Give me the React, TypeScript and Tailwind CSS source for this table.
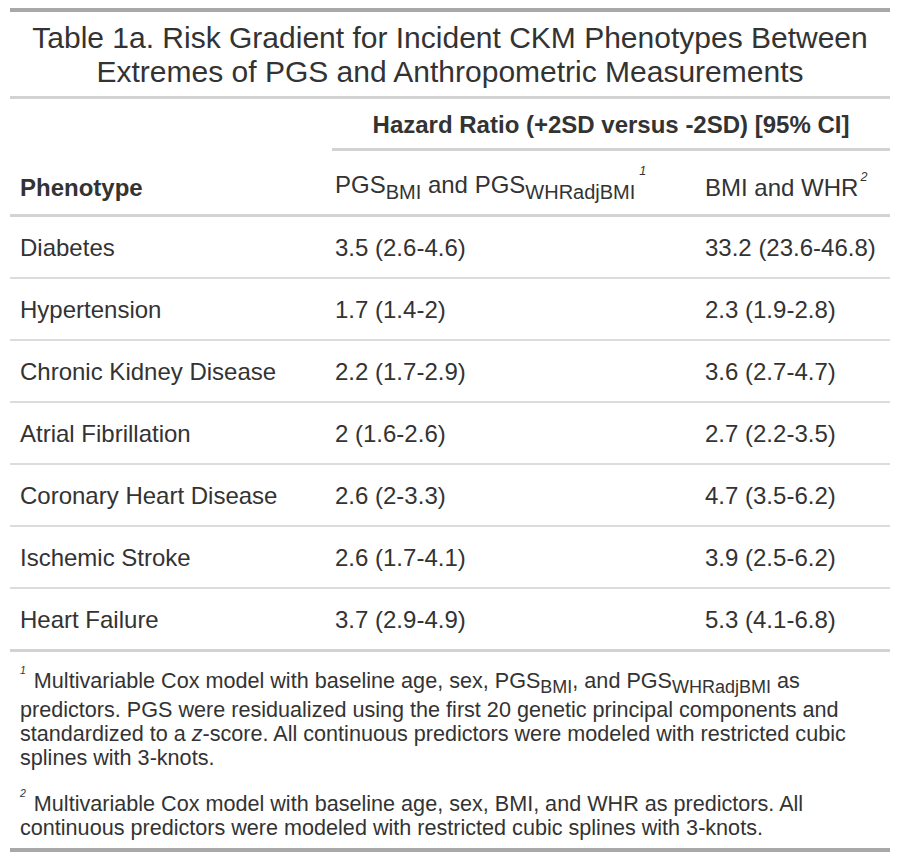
import React from "react";

type Row = {
  name: string;
  pgs: string;
  anthro: string;
};

const rows: Row[] = [
  { name: "Diabetes", pgs: "3.5 (2.6-4.6)", anthro: "33.2 (23.6-46.8)" },
  { name: "Hypertension", pgs: "1.7 (1.4-2)", anthro: "2.3 (1.9-2.8)" },
  { name: "Chronic Kidney Disease", pgs: "2.2 (1.7-2.9)", anthro: "3.6 (2.7-4.7)" },
  { name: "Atrial Fibrillation", pgs: "2 (1.6-2.6)", anthro: "2.7 (2.2-3.5)" },
  { name: "Coronary Heart Disease", pgs: "2.6 (2-3.3)", anthro: "4.7 (3.5-6.2)" },
  { name: "Ischemic Stroke", pgs: "2.6 (1.7-4.1)", anthro: "3.9 (2.5-6.2)" },
  { name: "Heart Failure", pgs: "3.7 (2.9-4.9)", anthro: "5.3 (4.1-6.8)" },
];

const grid = "grid grid-cols-[315px_370px_195px]";

const App = () => {
  return (
    <div
      className="px-[10px] pt-[8px] bg-white min-h-[858px]"
      style={{ fontFamily: '"Liberation Sans", Arial, sans-serif' }}
    >
      <div className="w-[880px] border-t-[4px] border-b-[4px] border-[#A8A8A8] text-[#333333]">
        {/* title */}
        <div className="border-b-[3px] border-[#D3D3D3] text-center text-[30px] leading-[34px] pt-[9px] pb-[7px] whitespace-nowrap">
          Table 1a. Risk Gradient for Incident CKM Phenotypes Between
          <br />
          Extremes of PGS and Anthropometric Measurements
        </div>

        {/* spanner */}
        <div className={grid}>
          <div></div>
          <div className="col-span-2 pl-[7px]">
            <div className="border-b-[3px] border-[#D3D3D3] text-center font-bold text-[24px] leading-[27px] pt-[12px] pb-[10px] whitespace-nowrap">
              Hazard Ratio (+2SD versus -2SD) [95% CI]
            </div>
          </div>
        </div>

        {/* column labels */}
        <div className={grid + " border-b-[3px] border-[#D3D3D3] text-[24px] leading-[27px] items-end h-[66px]"}>
          <div className="pl-[10px] pb-[13px] font-bold">Phenotype</div>
          <div className="pl-[10px] pb-[16px] whitespace-nowrap">
            PGS
            <sub className="text-[20px] leading-[0] top-[6px] bottom-auto">BMI</sub> and PGS
            <sub className="text-[20px] leading-[0] top-[6px] bottom-auto">WHRadjBMI</sub>
            <sup className="italic text-[12.5px] leading-[0] ml-[4px] top-[-18px]">1</sup>
          </div>
          <div className="pl-[10px] pb-[13px] whitespace-nowrap">
            BMI and WHR
            <sup className="italic text-[12.5px] leading-[0] ml-[2px] top-[-15px]">2</sup>
          </div>
        </div>

        {/* body */}
        {rows.map((r, i) => (
          <div
            key={r.name}
            className={
              grid +
              " items-center text-[24px] leading-[27px] " +
              (i === rows.length - 1
                ? "border-b-[3px] border-[#D3D3D3] h-[63px]"
                : "border-b-[2px] border-[#DCDCDC] h-[62px]")
            }
          >
            <div className="pl-[10px]">{r.name}</div>
            <div className="pl-[10px]">{r.pgs}</div>
            <div className="pl-[10px] whitespace-nowrap">{r.anthro}</div>
          </div>
        ))}

        {/* footnotes */}
        <div className="px-[10px] text-[21.6px] leading-[24px]">
          <div className="pt-[12px] pb-[11px]">
            <div className="h-[34px] leading-[34px] whitespace-nowrap">
              <sup className="italic text-[10.5px] leading-[0] top-[-14px] mr-[8px]">1</sup>
              Multivariable Cox model with baseline age, sex, PGS
              <sub className="text-[18px] leading-[0] top-[5px] bottom-auto">BMI</sub>, and PGS
              <sub className="text-[18px] leading-[0] top-[5px] bottom-auto">WHRadjBMI</sub> as
            </div>
            <div className="whitespace-nowrap">
              predictors. PGS were residualized using the first 20 genetic principal components and
            </div>
            <div className="whitespace-nowrap">
              standardized to a <i>z</i>-score. All continuous predictors were modeled with restricted cubic
            </div>
            <div className="whitespace-nowrap">splines with 3-knots.</div>
          </div>
          <div className="pt-[11px] pb-[8px]">
            <div className="whitespace-nowrap">
              <sup className="italic text-[10.5px] leading-[0] top-[-14px] mr-[8px]">2</sup>
              Multivariable Cox model with baseline age, sex, BMI, and WHR as predictors. All
            </div>
            <div className="whitespace-nowrap">
              continuous predictors were modeled with restricted cubic splines with 3-knots.
            </div>
          </div>
        </div>
      </div>
    </div>
  );
};

export default App;
